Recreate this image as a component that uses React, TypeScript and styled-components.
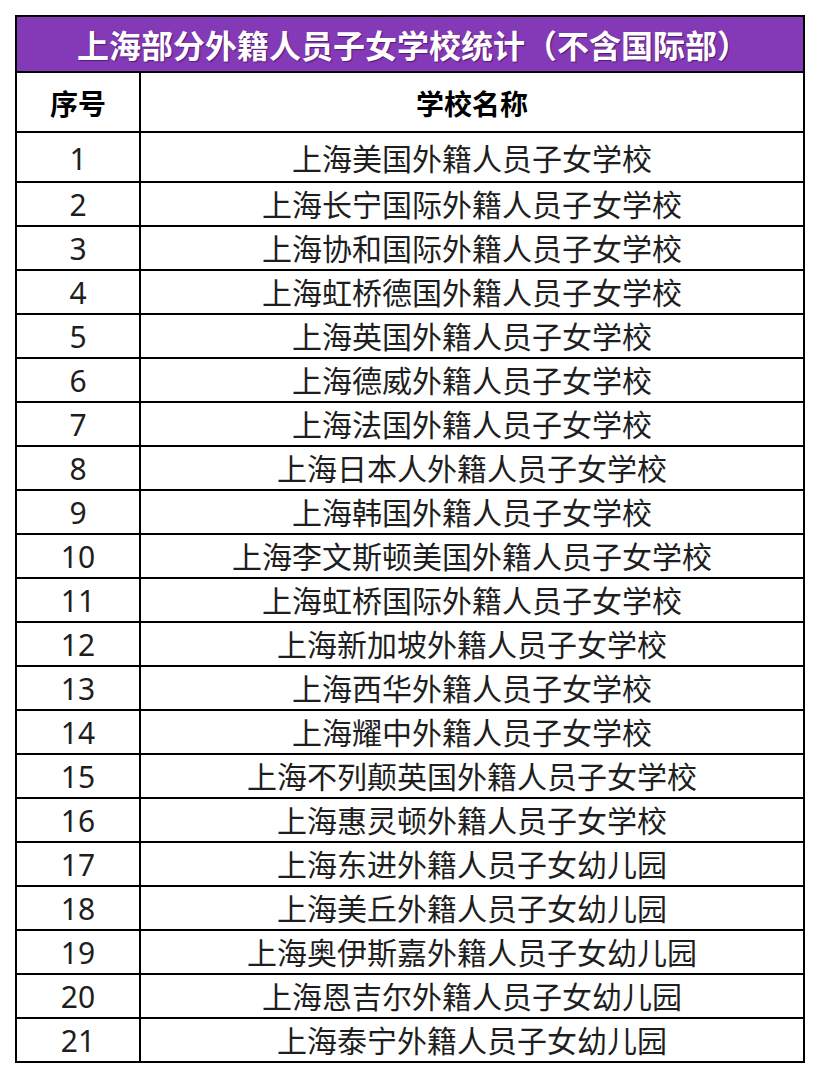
import styled, { createGlobalStyle } from 'styled-components';

const schools: string[] = [
    '上海美国外籍人员子女学校',
    '上海长宁国际外籍人员子女学校',
    '上海协和国际外籍人员子女学校',
    '上海虹桥德国外籍人员子女学校',
    '上海英国外籍人员子女学校',
    '上海德威外籍人员子女学校',
    '上海法国外籍人员子女学校',
    '上海日本人外籍人员子女学校',
    '上海韩国外籍人员子女学校',
    '上海李文斯顿美国外籍人员子女学校',
    '上海虹桥国际外籍人员子女学校',
    '上海新加坡外籍人员子女学校',
    '上海西华外籍人员子女学校',
    '上海耀中外籍人员子女学校',
    '上海不列颠英国外籍人员子女学校',
    '上海惠灵顿外籍人员子女学校',
    '上海东进外籍人员子女幼儿园',
    '上海美丘外籍人员子女幼儿园',
    '上海奥伊斯嘉外籍人员子女幼儿园',
    '上海恩吉尔外籍人员子女幼儿园',
    '上海泰宁外籍人员子女幼儿园',
];

const App: React.FC = () => {
    return (
        <>
            <GlobalStyle />
            <Sheet>
                <Title>上海部分外籍人员子女学校统计（不含国际部）</Title>
                <Row height={58} shift={3}>
                    <NumCell bold>序号</NumCell>
                    <NameCell bold>学校名称</NameCell>
                </Row>
                {schools.map((name, i) => (
                    <Row key={name} height={i === 0 ? 48 : 42} shift={i === 0 ? 4 : 1}>
                        <NumCell>{i + 1}</NumCell>
                        <NameCell>{name}</NameCell>
                    </Row>
                ))}
            </Sheet>
        </>
    );
}

const GlobalStyle = createGlobalStyle`
    * {
        box-sizing: border-box;
    }

    body {
        margin: 0;
        background: #ffffff;
        font-family: "Noto Sans", "Noto Sans CJK SC", sans-serif;
    }
`;

const Sheet = styled.div`
    width: 790px;
    margin: 15px;

    border: 2px solid #000000;
    background-color: #ffffff;
`;

const Title = styled.div`
    height: 56px;

    display: flex;
    align-items: center;
    justify-content: center;

    background-color: #8439b6;
    border-bottom: 2px solid #000000;

    color: #ffffff;
    font-size: 32px;
    font-weight: 700;
    text-shadow: 1px 1px 1px rgba(40, 0, 60, 0.55);
    padding-left: 6px;
`;

const Row = styled.div<{ height: number; shift: number }>`
    height: ${props => props.height + 2}px;

    display: grid;
    grid-template-columns: 124px 1fr;

    border-bottom: 2px solid #000000;

    & > div {
        padding-top: ${props => props.shift}px;
    }

    &:last-child {
        border-bottom: none;
        height: ${props => props.height}px;
    }
`;

const Cell = styled.div<{ bold?: boolean }>`
    display: flex;
    align-items: center;
    justify-content: center;

    color: ${props => props.bold ? '#000000' : '#1e1e1e'};
    font-size: ${props => props.bold ? '28px' : '30px'};
    font-weight: ${props => props.bold ? 700 : 400};
    line-height: 1;
    white-space: nowrap;
`;

const NumCell = styled(Cell)`
    border-right: 2px solid #000000;
`;

const NameCell = styled(Cell)``;

export default App;
